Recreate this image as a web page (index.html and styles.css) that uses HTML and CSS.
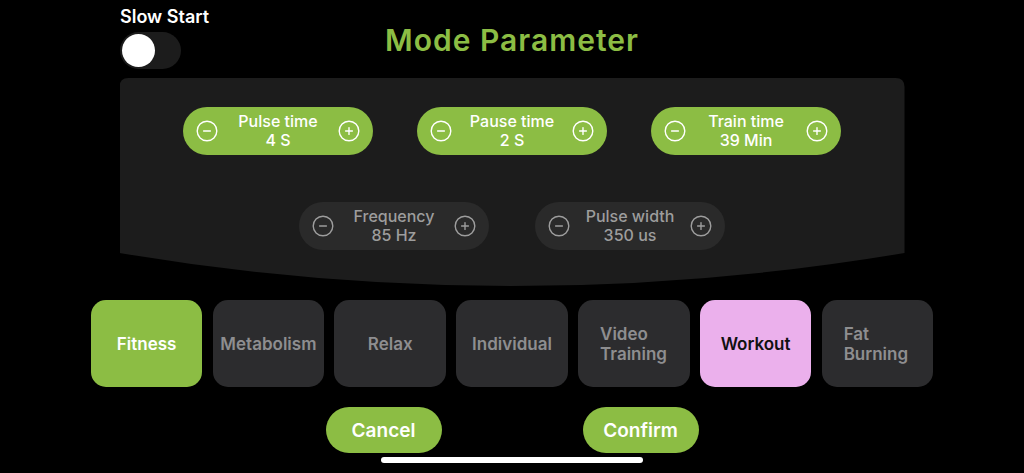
FILE: index.html
```html
<!DOCTYPE html>
<html lang="en">
<head>
<meta charset="utf-8">
<title>Mode Parameter</title>
<link rel="stylesheet" href="styles.css">
</head>
<body>
<div class="screen">
  <header class="header">
    <div class="slow">
      <div class="slow-label">Slow Start</div>
      <div class="toggle"><span class="knob"></span></div>
    </div>
    <h1 class="title">Mode Parameter</h1>
    <div></div>
  </header>

  <section class="panel">
    <div class="row">
      <div class="pill on">
        <svg class="ic" viewBox="0 0 22 22"><circle cx="11" cy="11" r="9.8"/><path d="M7.6 11h6.8"/></svg>
        <div class="ptext"><span>Pulse time</span><span>4 S</span></div>
        <svg class="ic" viewBox="0 0 22 22"><circle cx="11" cy="11" r="9.8"/><path d="M7.6 11h6.8M11 7.6v6.8"/></svg>
      </div>
      <div class="pill on">
        <svg class="ic" viewBox="0 0 22 22"><circle cx="11" cy="11" r="9.8"/><path d="M7.6 11h6.8"/></svg>
        <div class="ptext"><span>Pause time</span><span>2 S</span></div>
        <svg class="ic" viewBox="0 0 22 22"><circle cx="11" cy="11" r="9.8"/><path d="M7.6 11h6.8M11 7.6v6.8"/></svg>
      </div>
      <div class="pill on">
        <svg class="ic" viewBox="0 0 22 22"><circle cx="11" cy="11" r="9.8"/><path d="M7.6 11h6.8"/></svg>
        <div class="ptext"><span>Train time</span><span>39 Min</span></div>
        <svg class="ic" viewBox="0 0 22 22"><circle cx="11" cy="11" r="9.8"/><path d="M7.6 11h6.8M11 7.6v6.8"/></svg>
      </div>
    </div>
    <div class="row row2">
      <div class="pill off">
        <svg class="ic" viewBox="0 0 22 22"><circle cx="11" cy="11" r="9.8"/><path d="M7.6 11h6.8"/></svg>
        <div class="ptext"><span>Frequency</span><span>85 Hz</span></div>
        <svg class="ic" viewBox="0 0 22 22"><circle cx="11" cy="11" r="9.8"/><path d="M7.6 11h6.8M11 7.6v6.8"/></svg>
      </div>
      <div class="pill off">
        <svg class="ic" viewBox="0 0 22 22"><circle cx="11" cy="11" r="9.8"/><path d="M7.6 11h6.8"/></svg>
        <div class="ptext"><span>Pulse width</span><span>350 us</span></div>
        <svg class="ic" viewBox="0 0 22 22"><circle cx="11" cy="11" r="9.8"/><path d="M7.6 11h6.8M11 7.6v6.8"/></svg>
      </div>
    </div>
  </section>

  <nav class="modes">
    <div class="tile active">Fitness</div>
    <div class="tile">Metabolism</div>
    <div class="tile">Relax</div>
    <div class="tile">Individual</div>
    <div class="tile two">Video<br>Training</div>
    <div class="tile pink">Workout</div>
    <div class="tile two">Fat<br>Burning</div>
  </nav>

  <div class="actions">
    <button class="btn">Cancel</button>
    <button class="btn">Confirm</button>
  </div>

  <div class="home"></div>
</div>
</body>
</html>
```

FILE: styles.css
```css
* { box-sizing: border-box; }
html, body {
  margin: 0;
  padding: 0;
  background: #000;
}
body {
  font-family: Inter, "Noto Sans", "Liberation Sans", sans-serif;
  color: #fff;
  width: 1024px;
  height: 473px;
  overflow: hidden;
}
.screen {
  display: flex;
  flex-direction: column;
  height: 473px;
}
.header {
  display: grid;
  grid-template-columns: 1fr auto 1fr;
  height: 78px;
}
.slow {
  padding: 7px 0 0 120px;
}
.slow-label {
  font-size: 18px;
  line-height: 20px;
  font-weight: 600;
}
.toggle {
  margin-top: 5px;
  width: 61px;
  height: 37px;
  border-radius: 19px;
  background: #1c1c1c;
  display: flex;
  align-items: center;
  padding-left: 2px;
}
.knob {
  width: 33px;
  height: 33px;
  border-radius: 50%;
  background: #fff;
}
.title {
  margin: 22px 0 0;
  font-size: 30px;
  line-height: 36px;
  font-weight: 600;
  color: #8cbd44;
  letter-spacing: 1px;
}
.panel {
  width: 785px;
  height: 208px;
  margin: 0 auto;
  background: #1c1c1c;
  clip-path: path("M9 0 H776 Q785 0 785 9 V175 Q392 241 0 175 V9 Q0 0 9 0 Z");
  padding-top: 29px;
  display: flex;
  flex-direction: column;
  gap: 47px;
}
.row {
  display: flex;
  justify-content: center;
  gap: 44px;
}
.row2 { gap: 46px; }
.pill {
  width: 190px;
  height: 48px;
  border-radius: 24px;
  display: flex;
  align-items: center;
  justify-content: space-between;
  padding: 0 13px 0 13px;
}
.pill.on { background: #8cbd44; color: #fff; }
.pill.off { background: #2a2a2a; color: #9d9d9d; }
.ic {
  width: 22px;
  height: 22px;
  fill: none;
  stroke: currentColor;
  stroke-width: 1.4;
  stroke-linecap: round;
  flex: none;
}
.ptext {
  display: flex;
  flex-direction: column;
  align-items: center;
  font-size: 16px;
  line-height: 19px;
  font-weight: 500;
}
.modes {
  display: flex;
  justify-content: center;
  gap: 10.3px;
  margin-top: 14px;
}
.tile {
  width: 111.5px;
  height: 87px;
  border-radius: 15px;
  background: #2c2c2e;
  color: #8e8e90;
  font-size: 17px;
  line-height: 20px;
  font-weight: 600;
  display: flex;
  align-items: center;
  justify-content: center;
  text-align: center;
}
.tile.two {
  justify-content: flex-start;
  text-align: left;
  padding-left: 22px;
}
.tile.active { background: #8cbd44; color: #fff; }
.tile.pink { background: #ebb0ec; color: #111; }
.actions {
  display: flex;
  justify-content: center;
  gap: 141px;
  margin-top: 20px;
}
.btn {
  width: 116px;
  height: 46px;
  border: 0;
  border-radius: 23px;
  background: #8cbd44;
  color: #fff;
  font-family: inherit;
  font-size: 19px;
  font-weight: 600;
  padding: 0;
}
.home {
  width: 262px;
  height: 6px;
  border-radius: 3px;
  background: #fff;
  margin: 4px auto 0;
}
```
